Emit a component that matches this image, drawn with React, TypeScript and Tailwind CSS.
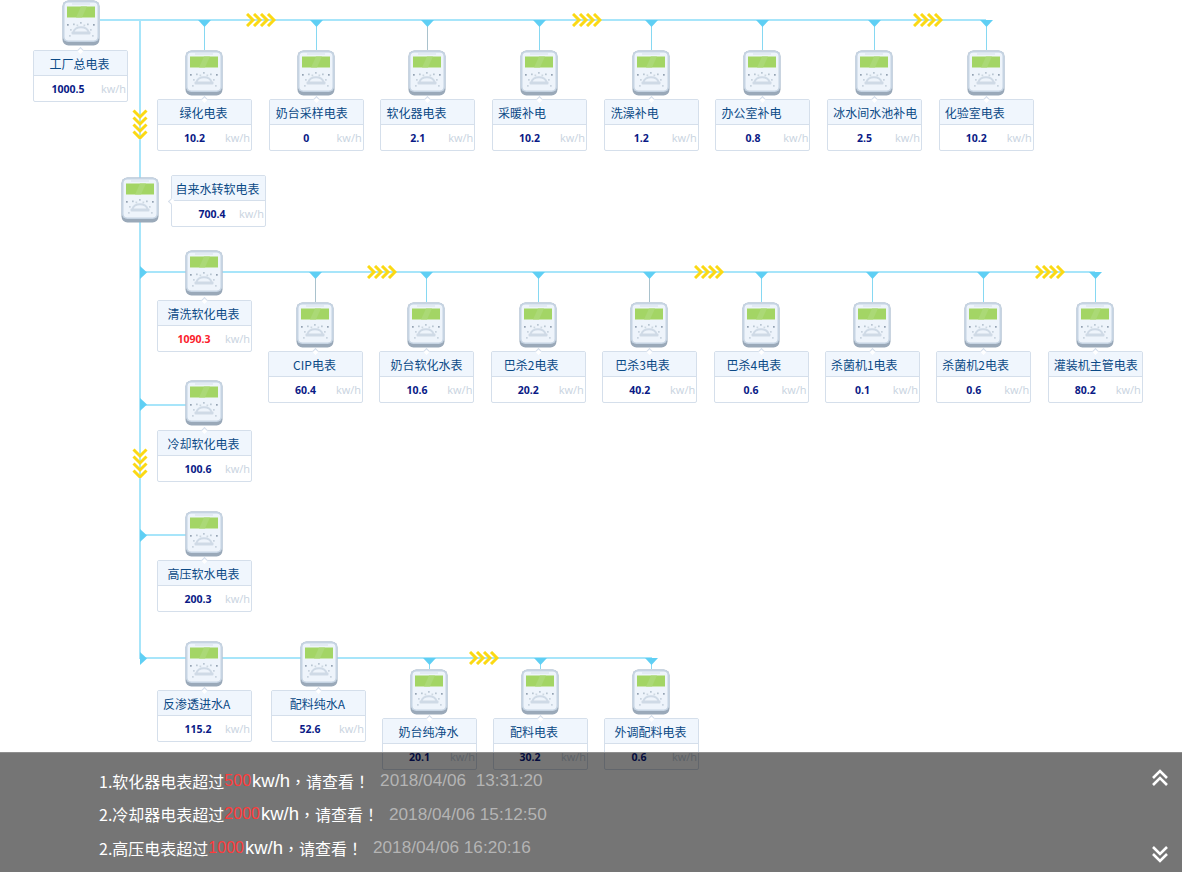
import React from "react";

const cjk = "font-['Noto_Sans_CJK_SC','Liberation_Sans',sans-serif]";
const tc = "font-['Noto_Sans_CJK_TC','Liberation_Sans',sans-serif]";
const sans = "font-['Open_Sans',sans-serif]";
const arial = "font-['Liberation_Sans',sans-serif]";

type N = { name: string; value: string; label?: string; val?: string; red?: boolean; grey?: boolean };

const C = "justify-center pr-[2px]";
const row1: N[] = [
  { name: "绿化电表", value: "10.2", label: C },
  { name: "奶台采样电表", value: "0", label: "pl-[6px]" },
  { name: "软化器电表", value: "2.1", label: "pl-[5px]", grey: true },
  { name: "采暖补电", value: "10.2", label: "pl-[5px]" },
  { name: "洗澡补电", value: "1.2", label: "pl-[6px]" },
  { name: "办公室补电", value: "0.8", label: "pl-[5px]" },
  { name: "冰水间水池补电", value: "2.5", label: "pl-[5px]" },
  { name: "化验室电表", value: "10.2", label: "pl-[5px]" },
];
const row2: N[] = [
  { name: "CIP电表", value: "60.4", label: C, grey: true },
  { name: "奶台软化水表", value: "10.6", label: "pl-[10px]" },
  { name: "巴杀2电表", value: "20.2", label: "pl-[12px]" },
  { name: "巴杀3电表", value: "40.2", label: "pl-[12px]", grey: true },
  { name: "巴杀4电表", value: "0.6", label: "pl-[12px]" },
  { name: "杀菌机1电表", value: "0.1", label: "pl-[5px]" },
  { name: "杀菌机2电表", value: "0.6", label: "pl-[5px]" },
  { name: "灌装机主管电表", value: "80.2", label: "pl-[5px]" },
];
const row3: N[] = [
  { name: "奶台纯净水", value: "20.1", label: C },
  { name: "配料电表", value: "30.2", label: "pl-[16px]", val: "left-[36px]" },
  { name: "外调配料电表", value: "0.6", label: C, val: "left-[34px]" },
];

function Meter({ cls = "ml-[28px]" }: { cls?: string }) {
  const dots: [number, number, string][] = [
    [5, 24, "#93a2b2"], [31, 24, "#93a2b2"], [11, 23.5, "#b8c5d2"], [25, 23.5, "#b8c5d2"], [18, 22, "#b8c5d2"],
    [8, 29, "#c8d3de"], [28, 29, "#c8d3de"], [7, 35, "#c8d3de"], [30, 35, "#c8d3de"], [14.5, 24.5, "#cdd8e2"], [21.5, 24.5, "#cdd8e2"],
  ];
  return (
    <svg className={`block shrink-0 ${cls}`} width="38" height="46" viewBox="0 0 38 46">
      <rect x="0.5" y="0.5" width="37" height="45" rx="6" fill="#9aa9b9" />
      <rect x="0.5" y="0.5" width="37" height="41.5" rx="6" fill="#c6d4e3" />
      <rect x="2.5" y="2.5" width="33" height="38" rx="4" fill="#eef4fb" />
      <rect x="10" y="3.5" width="18" height="1" fill="#d6e0ea" />
      <rect x="5" y="6.5" width="28" height="11" fill="#a3d565" />
      <path d="M14 17.5 L19 6.5 L25 6.5 L20 17.5 Z" fill="#abd976" />
      <path d="M11.5 32 C13 25.5 25 25.5 26.5 32" fill="none" stroke="#cfdae6" strokeWidth="2" />
      <rect x="9.5" y="31.5" width="19" height="3" rx="1" fill="#cfdae6" />
      {dots.map(([x, y, c], i) => (
        <rect key={i} x={x} y={y} width="1.7" height="1.7" fill={c} />
      ))}
    </svg>
  );
}

function Card({ n, cls = "", side }: { n: N; cls?: string; side?: boolean }) {
  return (
    <div className={`relative w-[95px] h-[52px] shrink-0 rounded-[2px] border border-[#d5dfeb] bg-white flex flex-col ${cjk} ${cls}`}>
      <div className={`h-[25px] shrink-0 pt-[2px] bg-[#f0f6fd] border-b border-[#d5dfeb] flex items-center text-[12px] leading-none text-[#0b4a86] whitespace-nowrap ${n.label ?? C}`}>
        {n.name}
      </div>
      <div className="relative flex-1">
        <span className={`absolute top-[6px] -translate-x-1/2 text-[10.5px] leading-[14px] font-bold ${sans} ${n.red ? "text-[#fb1c2c]" : "text-[#0a1a86]"} ${n.val ?? "left-[36.5px]"}`}>
          {n.value}
        </span>
        <span className={`absolute right-[1px] top-[6px] text-[11px] leading-[14px] text-[#c8d3e0] ${sans}`}>kw/h</span>
      </div>
      {side ? (
        <span className="absolute left-[-3px] top-[23px] w-[5px] h-[5px] rotate-45 bg-white border-l border-b border-[#d5dfeb]" />
      ) : (
        <span className="absolute left-[44px] top-[-3px] w-[5px] h-[5px] rotate-45 bg-white border-l border-t border-[#d5dfeb]" />
      )}
    </div>
  );
}

function Chevrons({ cls }: { cls: string }) {
  return (
    <svg className={`absolute ${cls}`} width="30" height="14" viewBox="0 0 30 14" fill="none" stroke="#fbd914" strokeWidth="3">
      {[0, 7, 14, 21].map((x) => (
        <path key={x} d={`M${x + 1} 1 L${x + 7} 7 L${x + 1} 13`} />
      ))}
    </svg>
  );
}

function VChevrons({ cls }: { cls: string }) {
  return (
    <svg className={`absolute ${cls}`} width="16" height="30" viewBox="0 0 16 30" fill="none" stroke="#fbd914" strokeWidth="3">
      {[0, 7, 14, 21].map((y) => (
        <path key={y} d={`M1.5 ${y + 1.5} L8 ${y + 8} L14.5 ${y + 1.5}`} />
      ))}
    </svg>
  );
}

function Branch({ n, stub = "h-[30px]", cardGap = "mt-[3px]" }: { n: N; stub?: string; cardGap?: string }) {
  return (
    <div className="flex flex-col w-[95px] shrink-0">
      <div className={`relative shrink-0 ml-[47px] w-px ${stub} ${n.grey ? "bg-[#a9c2cd]" : "bg-[#86d8f2]"}`}>
        <svg className="absolute left-[-6px] top-0" width="13" height="7" viewBox="0 0 13 7">
          <path d="M0 0 H13 L6.5 7 Z" fill="#5fcff4" />
        </svg>
      </div>
      <Meter />
      <Card n={n} cls={cardGap} />
    </div>
  );
}

const Tap = ({ cls }: { cls: string }) => (
  <svg className={`absolute ${cls}`} width="7" height="13" viewBox="0 0 7 13">
    <path d="M0 0 L7 6.5 L0 13 Z" fill="#5fcff4" />
  </svg>
);

function Alert({ idx, body, limit, time }: { idx: string; body: string; limit: string; time: string }) {
  return (
    <div className={`h-[33.5px] flex items-center whitespace-pre text-[16px] leading-none text-white ${cjk}`}>
      <span>{idx}{body}</span>
      <span className={`text-[#ff3b3b] ${arial}`}>{limit}</span>
      <span className={`ml-[1px] text-[18.5px] ${arial}`}>kw/h</span>
      <span className={tc}>，请查看！</span>
      <span className={`ml-[10px] text-[#b4b4b4] text-[17.2px] ${arial}`}>{time}</span>
    </div>
  );
}

const DoubleChevron = ({ up }: { up?: boolean }) => (
  <svg width="18" height="18" viewBox="0 0 18 18" fill="none" stroke="white" strokeWidth="2.6">
    <path d={up ? "M2 9 L9 2 L16 9" : "M2 2 L9 9 L16 2"} />
    <path d={up ? "M2 16 L9 9 L16 16" : "M2 9 L9 16 L16 9"} />
  </svg>
);

export default function App() {
  return (
    <div className="relative w-[1182px] h-[872px] overflow-hidden bg-white">
      <div className="absolute left-[139px] top-[19px] w-[2px] h-[640px] bg-[#a7e5fa]" />

      {/* factory main meter and first branch */}
      <section className="relative flex h-[175px] pl-[33px]">
        <div className="absolute left-[100px] top-[19px] w-[886px] h-[2px] bg-[#a7e5fa]" />
        <Chevrons cls="left-[246px] top-[13px]" />
        <Chevrons cls="left-[572px] top-[13px]" />
        <Chevrons cls="left-[913px] top-[13px]" />
        <VChevrons cls="left-[132px] top-[109px]" />
        <div className="flex flex-col w-[95px] shrink-0">
          <Meter cls="ml-[29px]" />
          <Card n={{ name: "工厂总电表", value: "1000.5", val: "left-[34px]" }} cls="mt-[4px]" />
        </div>
        <div className="relative flex gap-[16.7px] ml-[29px] pt-[20px]">
          {row1.map((n) => <Branch key={n.name} n={n} />)}
        </div>
      </section>

      {/* tap water softening */}
      <section className="relative flex h-[75px] pl-[121px]">
        <Meter cls="mt-[2px]" />
        <Card n={{ name: "自来水转软电表", value: "700.4", val: "left-[40px]" }} cls="ml-[12px]" side />
      </section>

      {/* wash softening and second branch */}
      <section className="relative flex h-[130px] pl-[157px]">
        <div className="absolute left-[140px] top-[21px] w-[955px] h-[2px] bg-[#a7e5fa]" />
        <Tap cls="left-[140px] top-[16px]" />
        <Chevrons cls="left-[367px] top-[15px]" />
        <Chevrons cls="left-[694px] top-[15px]" />
        <Chevrons cls="left-[1035px] top-[15px]" />
        <div className="relative flex flex-col w-[95px] shrink-0">
          <Meter />
          <Card n={{ name: "清洗软化电表", value: "1090.3", red: true, val: "left-[36px]" }} cls="mt-[4px]" />
        </div>
        <div className="relative flex gap-[16.4px] ml-[16px] pt-[22px]">
          {row2.map((n) => <Branch key={n.name} n={n} />)}
        </div>
      </section>

      {/* cooling softening */}
      <section className="relative h-[131px] pl-[157px]">
        <div className="absolute left-[140px] top-[24px] w-[50px] h-[2px] bg-[#a7e5fa]" />
        <Tap cls="left-[140px] top-[18px]" />
        <VChevrons cls="left-[132px] top-[68px]" />
        <div className="relative">
          <Meter />
          <Card n={{ name: "冷却软化电表", value: "100.6", val: "left-[40px]" }} cls="mt-[4px]" />
        </div>
      </section>

      {/* high pressure softened water */}
      <section className="relative h-[130px] pl-[157px]">
        <div className="absolute left-[140px] top-[23px] w-[50px] h-[2px] bg-[#a7e5fa]" />
        <Tap cls="left-[140px] top-[18px]" />
        <div className="relative">
          <Meter />
          <Card n={{ name: "高压软水电表", value: "200.3", val: "left-[40px]" }} cls="mt-[3px]" />
        </div>
      </section>

      {/* reverse osmosis and third branch */}
      <section className="relative flex pl-[157px]">
        <div className="absolute left-[140px] top-[16px] w-[512px] h-[2px] bg-[#a7e5fa]" />
        <Tap cls="left-[140px] top-[11px]" />
        <Chevrons cls="left-[469px] top-[10px]" />
        <div className="relative w-[95px] shrink-0">
          <Meter />
          <Card n={{ name: "反渗透进水A", value: "115.2", label: "pl-[5px]", val: "left-[40px]" }} cls="mt-[3px]" />
        </div>
        <div className="relative w-[95px] shrink-0 ml-[19px]">
          <Meter cls="ml-[29px]" />
          <Card n={{ name: "配料纯水A", value: "52.6", val: "left-[38px]" }} cls="mt-[3px]" />
        </div>
        <div className="relative flex gap-[16px] ml-[16px] pt-[17px]">
          {row3.map((n) => <Branch key={n.name} n={n} stub="h-[11px]" />)}
        </div>
      </section>

      {/* alert bar */}
      <div className="absolute left-0 right-0 bottom-0 h-[120px] bg-black/54 border-t border-[#8f8f8f] pl-[99px] pr-[13px] pt-[11px] flex justify-between">
        <div>
          <Alert idx="1." body="软化器电表超过" limit="500" time="2018/04/06  13:31:20" />
          <Alert idx="2." body="冷却器电表超过" limit="2000" time="2018/04/06 15:12:50" />
          <Alert idx="2." body="高压电表超过" limit="1000" time="2018/04/06 16:20:16" />
        </div>
        <div className="flex flex-col justify-between pt-[5px] pb-[9px]">
          <DoubleChevron up />
          <DoubleChevron />
        </div>
      </div>
    </div>
  );
}
